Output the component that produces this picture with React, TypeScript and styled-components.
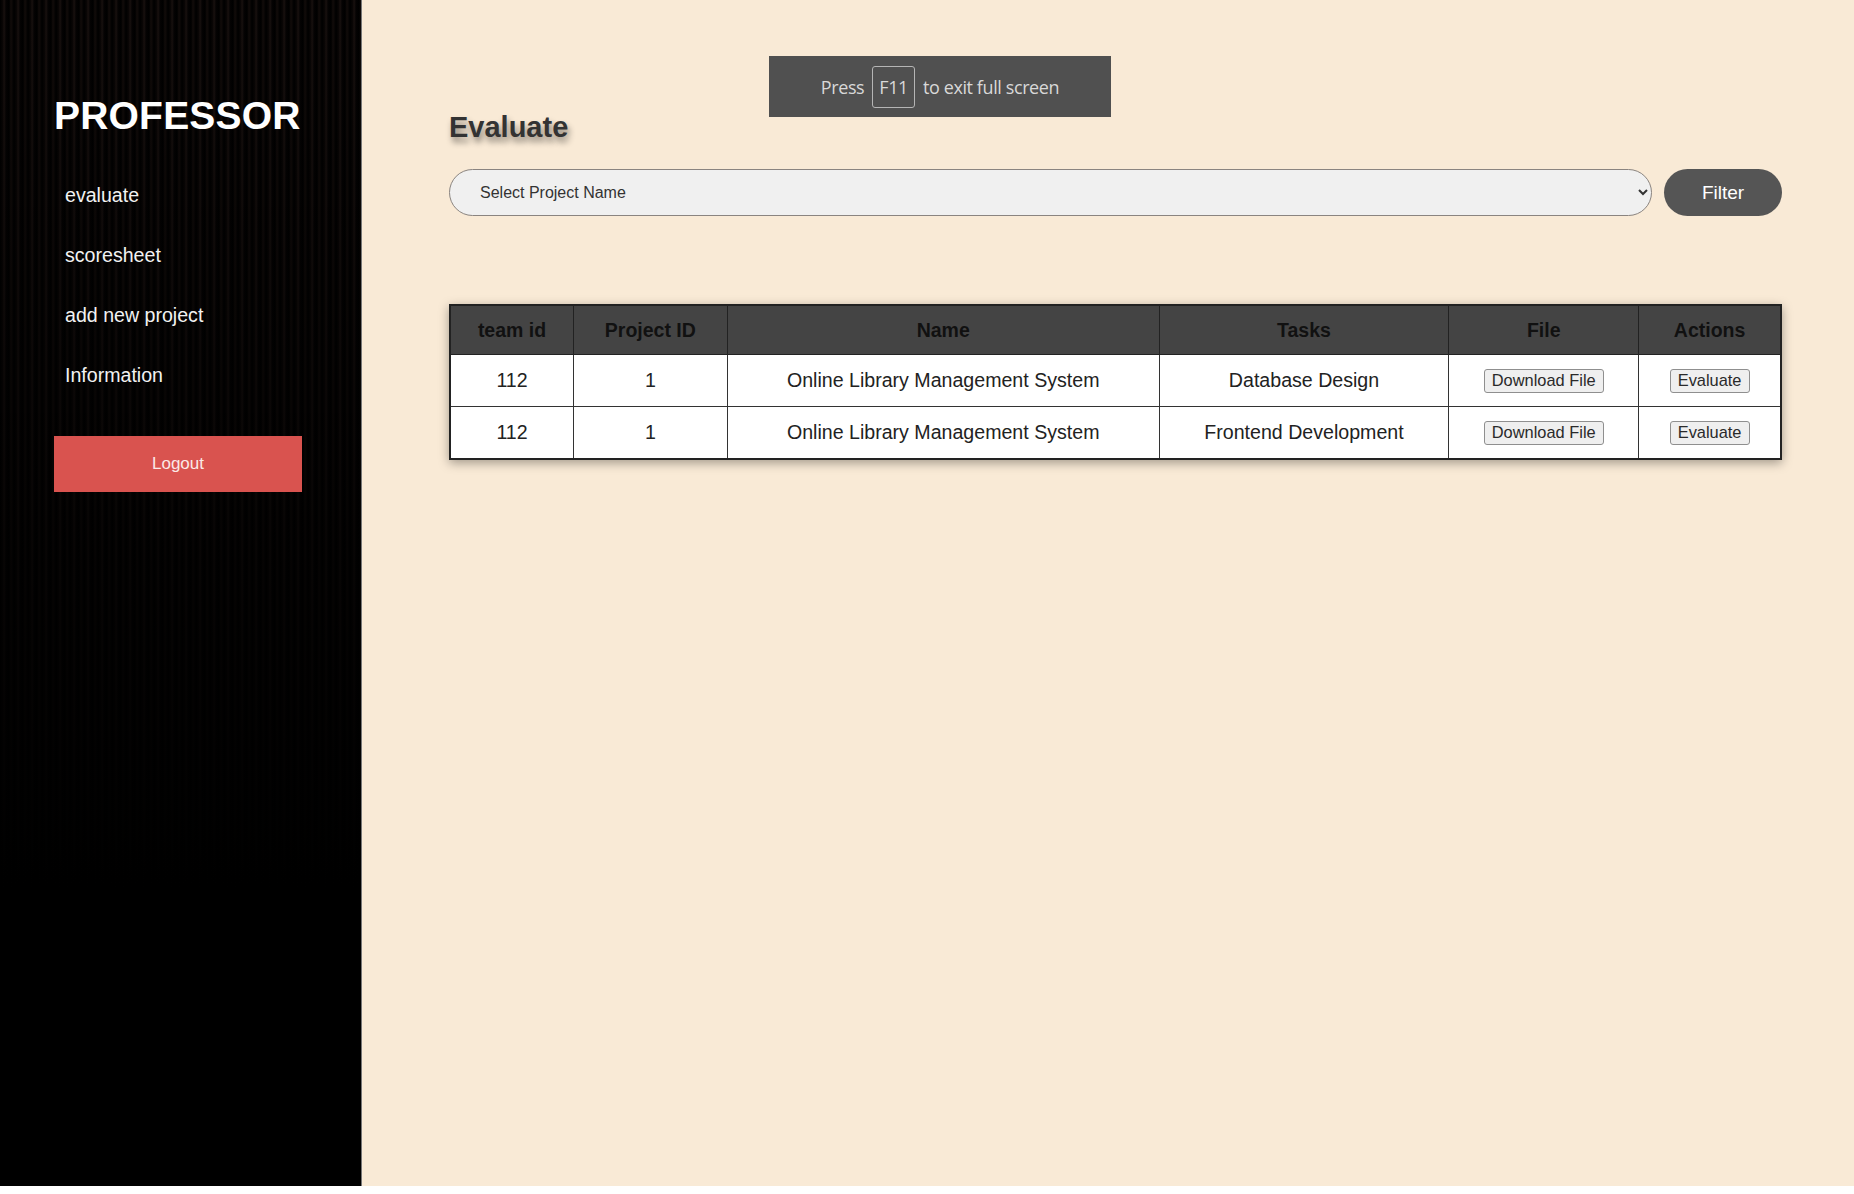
import styled, { createGlobalStyle } from 'styled-components';

const GlobalStyle = createGlobalStyle`
    body {
        margin: 0;
        background: #ffffff;
        font-family: "Liberation Sans", Arial, sans-serif;
    }
`

const Page = styled.div`
    display: flex;
    height: 1186px;
    position: relative;
`

const Sidebar = styled.aside`
    width: 362px;
    flex-shrink: 0;
    box-sizing: border-box;
    padding: 93px 0 0 54px;
    background:
        linear-gradient(to bottom, rgba(0,0,0,0) 0%, rgba(0,0,0,0.5) 35%, #000 75%),
        repeating-linear-gradient(to right, #000 0px, #0b0706 3px, #1a1210 4px, #050303 6px, #000 9px, #120c0a 11px, #000 14px);
    border-right: 1px solid #777;
`

const Brand = styled.h1`
    margin: 0 0 26px;
    font-size: 39px;
    line-height: 46px;
    font-weight: 700;
    color: #ffffff;
    letter-spacing: 0.2px;
`

const NavList = styled.nav`
    display: flex;
    flex-direction: column;
    padding-left: 11px;
`

const NavItem = styled.a`
    font-size: 19.6px;
    line-height: 60px;
    color: #f2f2f2;
    text-decoration: none;
`

const LogoutButton = styled.button`
    margin-top: 31px;
    width: 248px;
    height: 56px;
    border: none;
    background: #d9534f;
    color: #fbe9e7;
    font-family: "Liberation Sans", Arial, sans-serif;
    font-size: 17px;
`

const Main = styled.main`
    flex: 1;
    min-width: 0;
    background: #f9ead6;
    padding: 110px 72px 0 87px;
`

const Title = styled.h2`
    margin: 0 0 25px;
    font-size: 29px;
    line-height: 34px;
    font-weight: 700;
    color: #333;
    text-shadow: 2px 5px 6px rgba(0, 0, 0, 0.45);
`

const FilterRow = styled.div`
    display: flex;
    gap: 12px;
    align-items: center;
`

const ProjectSelect = styled.select`
    flex: 1;
    height: 47px;
    border: 1px solid #8a8480;
    border-radius: 24px;
    background: #f0f0f0;
    padding: 0 10px 0 26px;
    font-family: "Liberation Sans", Arial, sans-serif;
    font-size: 16px;
    color: #333;
`

const FilterButton = styled.button`
    width: 118px;
    height: 47px;
    border: none;
    border-radius: 24px;
    background: #555;
    color: #fff;
    font-family: "Liberation Sans", Arial, sans-serif;
    font-size: 19px;
`

const Table = styled.table`
    margin-top: 88px;
    width: 100%;
    border-collapse: collapse;
    table-layout: fixed;
    border: 2px solid #222;
    box-shadow: 0 3px 10px rgba(0, 0, 0, 0.35);
    background: #fff;
`

const Th = styled.th<{ $w: number }>`
    width: ${p => (p.$w / 1333) * 100}%;
    height: 46px;
    background: #444;
    color: #111;
    font-size: 19.5px;
    font-weight: 700;
    border: 1px solid #222;
`

const Td = styled.td`
    height: 51px;
    text-align: center;
    font-size: 19.6px;
    color: #222;
    border: 1px solid #333;
    padding: 0;
`

const CellButton = styled.button`
    height: 24px;
    padding: 0 7px;
    border: 1px solid #8f8f8f;
    border-radius: 3px;
    background: #efefef;
    font-family: "Liberation Sans", Arial, sans-serif;
    font-size: 16.4px;
    color: #2a2a2a;
`

const Toast = styled.div`
    position: absolute;
    left: 769px;
    top: 56px;
    width: 342px;
    height: 61px;
    display: flex;
    align-items: center;
    justify-content: center;
    gap: 8px;
    background: #505050;
    color: #d8d8d8;
    font-family: "Open Sans", "Noto Sans", sans-serif;
    font-size: 18px;
    letter-spacing: -0.4px;
`

const Key = styled.span`
    border: 1px solid #b5b5b5;
    border-radius: 3px;
    padding: 6px 6px;
    line-height: 28px;
`

const columns = [
    { label: 'team id', width: 122 },
    { label: 'Project ID', width: 153 },
    { label: 'Name', width: 436 },
    { label: 'Tasks', width: 291 },
    { label: 'File', width: 190 },
    { label: 'Actions', width: 141 },
]

const rows = [
    { team: 112, project: 1, name: 'Online Library Management System', task: 'Database Design' },
    { team: 112, project: 1, name: 'Online Library Management System', task: 'Frontend Development' },
]

export default function App() {
    return (
        <>
            <GlobalStyle />
            <Page>
                <Sidebar>
                    <Brand>PROFESSOR</Brand>
                    <NavList>
                        <NavItem>evaluate</NavItem>
                        <NavItem>scoresheet</NavItem>
                        <NavItem>add new project</NavItem>
                        <NavItem>Information</NavItem>
                    </NavList>
                    <LogoutButton>Logout</LogoutButton>
                </Sidebar>
                <Main>
                    <Title>Evaluate</Title>
                    <FilterRow>
                        <ProjectSelect defaultValue=''>
                            <option value=''>Select Project Name</option>
                            <option value='1'>Online Library Management System</option>
                        </ProjectSelect>
                        <FilterButton>Filter</FilterButton>
                    </FilterRow>
                    <Table>
                        <thead>
                            <tr>
                                {columns.map(c => <Th key={c.label} $w={c.width}>{c.label}</Th>)}
                            </tr>
                        </thead>
                        <tbody>
                            {rows.map((r, i) => (
                                <tr key={i}>
                                    <Td>{r.team}</Td>
                                    <Td>{r.project}</Td>
                                    <Td>{r.name}</Td>
                                    <Td>{r.task}</Td>
                                    <Td><CellButton>Download File</CellButton></Td>
                                    <Td><CellButton>Evaluate</CellButton></Td>
                                </tr>
                            ))}
                        </tbody>
                    </Table>
                </Main>
                <Toast>
                    Press <Key>F11</Key> to exit full screen
                </Toast>
            </Page>
        </>
    )
}
